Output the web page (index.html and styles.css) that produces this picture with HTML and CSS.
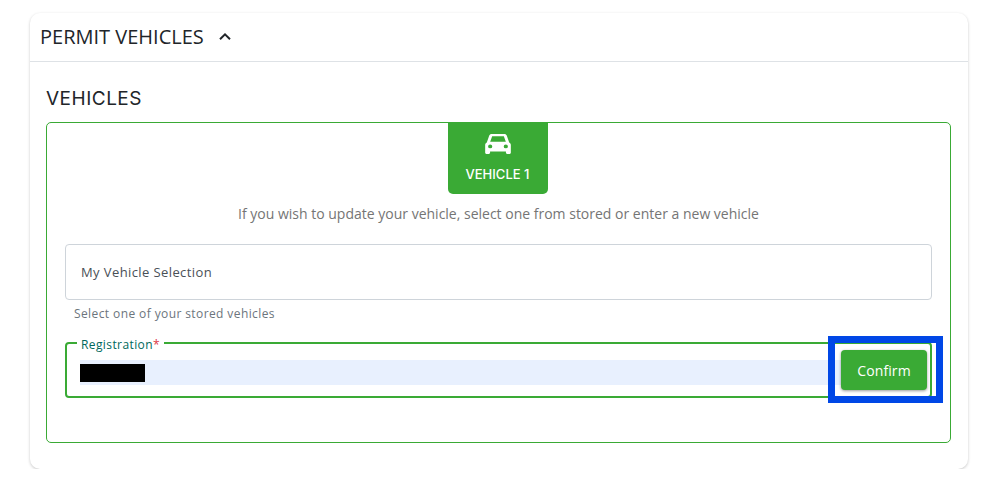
FILE: index.html
```html
<!DOCTYPE html>
<html lang="en">
<head>
  <meta charset="UTF-8">
  <meta name="viewport" content="width=device-width, initial-scale=1.0">
  <title>Permit Vehicles</title>
  <link rel="stylesheet" href="styles.css">
</head>
<body>
  <section class="card">
    <header class="card-head">
      <h1>PERMIT VEHICLES</h1>
      <svg class="chevron" width="14" height="9" viewBox="0 0 14 9" aria-hidden="true">
        <path d="M2 7.2 7 2.4l5 4.8" fill="none" stroke="#212529" stroke-width="2"/>
      </svg>
    </header>
    <div class="card-body">
      <h2>VEHICLES</h2>
      <div class="panel">
        <div class="tab">
          <svg width="28" height="23" viewBox="0 0 24 22" preserveAspectRatio="none" aria-hidden="true">
            <path fill="#fff" fill-rule="evenodd" d="M6.6 1h10.8c1 0 1.8.6 2.1 1.5L21.6 9c.9.5 1.4 1.3 1.4 2.3V19a1 1 0 0 1-1 1h-2.2a1 1 0 0 1-1-1v-1.4H5.2V19a1 1 0 0 1-1 1H2a1 1 0 0 1-1-1v-7.7c0-1 .5-1.8 1.4-2.3l2.1-6.500C4.800 1.600 5.600 1 6.600 1ZM7 3.200 5.300 8.400h13.400L17 3.200H7ZM5.300 11a1.800 1.800 0 1 0 0 3.600 1.800 1.800 0 0 0 0-3.600Zm13.400 0a1.800 1.800 0 1 0 0 3.600 1.800 1.800 0 0 0 0-3.600Z"/>
          </svg>
          <span>VEHICLE 1</span>
        </div>
        <p class="intro">If you wish to update your vehicle, select one from stored or enter a new vehicle</p>
        <div class="select">My Vehicle Selection</div>
        <p class="hint">Select one of your stored vehicles</p>
        <fieldset class="reg">
          <legend>Registration<span class="req">*</span></legend>
          <div class="reg-row">
            <div class="reg-input"><span class="redact"></span></div>
            <button class="confirm" type="button">Confirm</button>
          </div>
        </fieldset>
        <div class="highlight"></div>
      </div>
    </div>
  </section>
</body>
</html>
```

FILE: styles.css
```css
* {
  box-sizing: border-box;
}
body {
  margin: 0;
  padding: 13px 28px 0 30px;
  background: #fff;
  font-family: "Open Sans", Arial, sans-serif;
  color: #6c757d;
}
.card {
  height: 456px;
  border-radius: 10px;
  background: #fff;
  box-shadow: 0 1px 3px rgba(0, 0, 0, 0.22);
}
.card-head {
  display: flex;
  align-items: center;
  gap: 14px;
  height: 49px;
  padding: 0 10px;
  border-bottom: 1px solid #dee2e6;
}
.card-head h1 {
  margin: 0 0 2px;
  font-size: 20px;
  font-weight: 400;
  color: #212529;
}
.chevron {
  margin-top: -1px;
}
.card-body {
  padding: 25px 17px 0 16px;
}
.card-body h2 {
  margin: 0 0 12px;
  height: 23px;
  font-family: Inter, Arial, sans-serif;
  font-size: 19px;
  line-height: 23px;
  font-weight: 400;
  letter-spacing: 0.5px;
  color: #212529;
}
.panel {
  position: relative;
  display: flex;
  flex-direction: column;
  height: 321px;
  padding: 0 18px;
  border: 1px solid #3aaa35;
  border-radius: 5px;
}
.tab {
  display: flex;
  flex-direction: column;
  align-items: center;
  align-self: center;
  width: 100px;
  height: 71px;
  margin-right: 2px;
  padding-top: 10px;
  background: #3aaa35;
  border-radius: 0 0 5px 5px;
  color: #fff;
}
.tab span {
  margin-top: 10px;
  font-family: Inter, Arial, sans-serif;
  font-size: 13px;
  line-height: 16px;
  font-weight: 500;
}
.intro {
  margin: 10px 0 21px;
  font-size: 14px;
  line-height: 19px;
  text-align: center;
  color: #757575;
}
.select {
  height: 56px;
  padding: 0 15px;
  border: 1px solid #ced4da;
  border-radius: 4px;
  font-size: 13px;
  line-height: 54px;
  letter-spacing: 0.4px;
  color: #495057;
}
.hint {
  margin: 6px 0 0 9px;
  font-size: 12px;
  line-height: 16px;
  letter-spacing: 0.4px;
  color: #6c757d;
}
.reg {
  min-width: 0;
  height: 65px;
  margin: 11px 0 0;
  padding: 0 3px 0 13px;
  border: 2px solid #3aaa35;
  border-radius: 4px;
}
.reg legend {
  margin-left: -3px;
  padding: 4px 4px 0;
  font-size: 12px;
  line-height: 16px;
  letter-spacing: 0.4px;
  color: #00695c;
}
.req {
  color: #dc3545;
}
.reg-row {
  display: flex;
  align-items: flex-start;
}
.reg-input {
  flex: 1;
  height: 25px;
  margin-top: 7px;
  padding-top: 4px;
  background: #e8f0fe;
}
.redact {
  display: block;
  width: 65px;
  height: 18px;
  background: #000;
}
.confirm {
  width: 86px;
  height: 40px;
  margin-top: -3px;
  border: none;
  border-radius: 4px;
  background: #3aaa35;
  box-shadow: 0 1px 3px rgba(0, 0, 0, 0.4);
  font-family: "Open Sans", Arial, sans-serif;
  font-size: 14px;
  letter-spacing: 0.1px;
  color: #fff;
}
/* annotation drawn over the form */
.highlight {
  position: absolute;
  left: 781px;
  top: 213px;
  width: 115px;
  height: 67px;
  border: 7px solid #0047e6;
  pointer-events: none;
}
```
